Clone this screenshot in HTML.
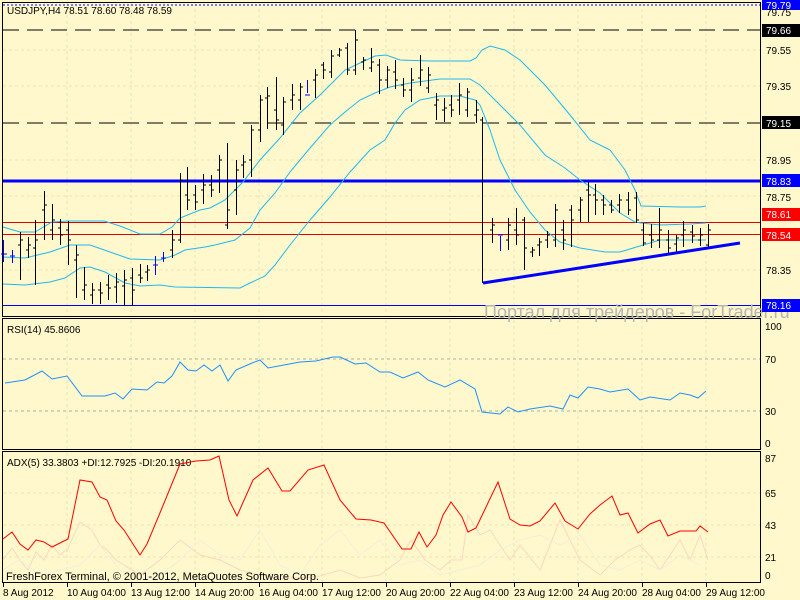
<!DOCTYPE html>
<html><head><meta charset="utf-8"><style>
html,body{margin:0;padding:0;background:#fff8cc;width:800px;height:600px;overflow:hidden}
svg{display:block}
text{font-family:"Liberation Sans",sans-serif;font-size:10px;fill:#000}
</style></head><body>
<svg width="800" height="600" viewBox="0 0 800 600" xmlns="http://www.w3.org/2000/svg">
<rect width="800" height="600" fill="#fff8cc"/>
<!-- grid -->
<g stroke="#ece4b4" stroke-width="1" stroke-dasharray="3,3">
<path d="M67 3V316M131 3V316M195 3V316M259 3V316M322 3V316M386 3V316M450 3V316M514 3V316M578 3V316M642 3V316M706 3V316"/>
<path d="M3 50H760M3 86H760M3 160H760M3 196H760M3 270H760"/>
<path d="M67 320V449M131 320V449M195 320V449M259 320V449M322 320V449M386 320V449M450 320V449M514 320V449M578 320V449M642 320V449M706 320V449"/>
<path d="M67 453V581M131 453V581M195 453V581M259 453V581M322 453V581M386 453V581M450 453V581M514 453V581M578 453V581M642 453V581M706 453V581"/>
<path d="M3 493H760M3 525H760M3 557H760"/>
</g>
<!-- pane borders -->
<g fill="none" stroke="#000" stroke-width="1">
<rect x="2.5" y="2.5" width="758" height="314"/>
<rect x="2.5" y="318.5" width="758" height="131"/>
<rect x="2.5" y="451.5" width="758" height="131"/>
</g>
<!-- horizontal levels -->
<path d="M3 5H760" stroke="#0000ff" stroke-dasharray="2,2"/>
<path d="M3 30H760M3 123H760" stroke="#000" stroke-dasharray="16,8"/>
<path d="M3 181H760" stroke="#0000ff" stroke-width="3"/>
<path d="M3 222.5H760M3 234.5H760" stroke="#e00000" stroke-width="1"/>
<path d="M3 305.5H760" stroke="#0000ff" stroke-width="1"/>
<!-- bollinger -->
<g fill="none" stroke="#20b8f0" stroke-width="1">
<polyline points="3,227 20,232 35,232 52,222 68,221 104,221 120,226 140,234 160,234 172,227 180,218 200,210 210,208 225,200 243,182 260,160 280,138 300,113 320,95 345,70 360,63 375,56 386,55 400,60 430,61 470,61 476,58 482,50 490,46 505,50 520,60 545,85 570,115 590,140 610,150 625,170 635,190 641,206 680,207 700,207 706,206"/>
<polyline points="3,257 25,258 50,252 70,245 90,245 110,252 130,259 160,260 175,255 185,250 205,247 215,245 235,240 250,228 260,210 275,193 290,172 310,148 330,125 345,112 360,100 375,93 390,87 410,83 440,79 470,79 480,85 495,100 520,125 545,155 565,168 580,180 600,193 620,213 635,222 641,223 660,225 690,224 706,223"/>
<polyline points="3,284 25,285 50,282 65,278 80,268 90,267 105,272 125,283 140,286 160,285 175,287 240,288 250,283 265,276 275,265 290,245 310,220 330,197 350,172 370,150 385,140 395,123 405,110 420,100 440,96 460,96 475,100 480,105 490,130 500,160 515,190 530,212 545,230 560,242 580,248 605,252 620,252 640,246 650,243 660,240 690,240 706,240"/>
</g>
<!-- bars -->
<g stroke="#000" stroke-width="1" fill="none">
<path d="M20.5 232V280M28.5 237V258M35.5 220V285M44.5 191V240M52.5 204V240M60.5 219V245M68.5 221V265M76.5 245V298M84.5 267V300M92.5 283V304M100.5 282V304M108.5 275V300M116.5 273V303M124.5 270V306M132.5 268V306M140.5 264V283M147.5 265V281M172.5 230V258M180.5 173V243M187.5 167V210M195.5 185V210M203.5 174V204M211.5 175V197M219.5 155V193M227.5 143V229M236.5 160V215M243.5 155V178M251.5 125V177M260.5 95V142M267.5 87V129M276.5 77V130M283.5 97V135M292.5 84V110M300.5 83V110M315.5 69V98M323.5 62V79M331.5 50V78M339.5 48V57M347.5 43V75M355.5 30V75M363.5 57V70M371.5 48V72M379.5 59V94M387.5 66V88M395.5 60V89M403.5 78V97M411.5 68V102M420.5 55V86M428.5 67V93M436.5 93V120M444.5 98V122M451.5 95V117M459.5 83V115M467.5 88V117M476.5 100V123M482.5 117V283M492.5 218V243M508.5 218V250M516.5 208V245M524.5 217V270M532.5 247V257M539.5 238V256M547.5 231V248M555.5 204V247M563.5 220V250M571.5 205V247M580.5 197V222M588.5 182V222M595.5 184V215M603.5 195V215M611.5 200V213M619.5 194V213M628.5 192V215M636.5 192V223M643.5 223V246M651.5 224V248M659.5 208V248M668.5 230V253M676.5 235V253M683.5 221V247M692.5 225V243M700.5 228V246M708.5 224V248"/>
<path d="M18 245h2M21 240h2M26 250h2M29 245h2M33 248h2M36 240h2M42 210h2M45 205h2M50 230h2M53 220h2M58 228h2M61 235h2M66 230h2M69 240h2M74 260h2M77 255h2M82 290h2M85 285h2M90 295h2M93 290h2M98 290h2M101 293h2M106 285h2M109 288h2M114 287h2M117 282h2M122 286h2M125 280h2M130 278h2M133 290h2M138 275h2M141 278h2M145 272h2M148 270h2M170 250h2M173 240h2M178 240h2M181 180h2M185 195h2M188 200h2M193 195h2M196 202h2M201 190h2M204 185h2M209 185h2M212 190h2M217 170h2M220 160h2M225 225h2M228 210h2M234 190h2M237 170h2M241 165h2M244 162h2M249 160h2M252 130h2M258 130h2M261 100h2M265 98h2M268 96h2M274 110h2M277 120h2M281 125h2M284 102h2M290 100h2M293 95h2M298 100h2M301 87h2M313 80h2M316 75h2M321 65h2M324 70h2M329 72h2M332 56h2M337 55h2M340 50h2M345 48h2M348 70h2M353 70h2M356 40h2M361 62h2M364 60h2M369 68h2M372 62h2M377 65h2M380 80h2M385 80h2M388 70h2M393 72h2M396 80h2M401 85h2M404 90h2M409 90h2M412 80h2M418 78h2M421 70h2M426 88h2M429 75h2M434 105h2M437 100h2M442 110h2M445 108h2M449 105h2M452 110h2M457 100h2M460 95h2M465 110h2M468 92h2M474 115h2M477 110h2M480 120h2M490 230h2M493 225h2M506 240h2M509 225h2M514 230h2M517 235h2M522 220h2M525 248h2M530 252h2M533 250h2M537 245h2M540 242h2M545 240h2M548 235h2M553 240h2M556 210h2M561 230h2M564 240h2M569 210h2M572 220h2M578 210h2M581 200h2M586 190h2M589 195h2M593 195h2M596 200h2M601 200h2M604 205h2M609 205h2M612 210h2M617 205h2M620 200h2M626 200h2M629 210h2M634 198h2M637 220h2M641 230h2M644 243h2M649 235h2M652 240h2M657 240h2M660 230h2M666 240h2M669 248h2M674 244h2M677 238h2M681 235h2M684 230h2M690 232h2M693 236h2M698 240h2M701 235h2M706 245h2M709 230h2"/>
</g>
<g stroke="#0000ff" stroke-width="1">
<path d="M3.5 240V262M1 254h6M12.5 250V263M10 256h5M155.5 256V275M153 265h5M163.5 252V262M161 258h5M307.5 80V93M305 95h5M500.5 236V251M498 235h5"/>
</g>
<path d="M483 283L740 243" stroke="#0000ff" stroke-width="3"/>
<!-- watermark -->
<text x="484" y="318" style="font-size:18px;fill:#b4b4b4">Портал для трейдеров - ForTrader.ru</text>
<text x="7" y="14" style="font-size:10px">USDJPY,H4  78.51 78.60 78.48 78.59</text>
<!-- right axis labels -->
<g>
<rect x="762" y="0" width="38" height="10" fill="#0000ff"/><text x="766" y="9" style="fill:#fff">79.79</text>
<text x="766" y="16">79.75</text>
<rect x="762" y="24" width="38" height="13" fill="#000"/><text x="766" y="34" style="fill:#fff">79.66</text>
<text x="766" y="54">79.55</text>
<text x="766" y="90">79.35</text>
<rect x="762" y="116" width="38" height="13" fill="#000"/><text x="766" y="127" style="fill:#fff">79.15</text>
<text x="766" y="164">78.95</text>
<rect x="762" y="174" width="38" height="13" fill="#0000ff"/><text x="766" y="185" style="fill:#fff">78.83</text>
<text x="766" y="201">78.75</text>
<rect x="762" y="208" width="38" height="13" fill="#ff0000"/><text x="766" y="218" style="fill:#fff">78.61</text>
<rect x="762" y="228" width="38" height="13" fill="#ff0000"/><text x="766" y="239" style="fill:#fff">78.54</text>
<text x="766" y="274">78.35</text>
<rect x="762" y="299" width="38" height="13" fill="#0000ff"/><text x="766" y="309" style="fill:#fff">78.16</text>
</g>
<!-- RSI -->
<path d="M3 359H760M3 411H760" stroke="#b0b0a0" stroke-dasharray="3,3"/>
<text x="7" y="333">RSI(14) 45.8606</text>
<polyline fill="none" stroke="#1e90ff" stroke-width="1" points="5,383 25,380 42,371 52,379 67,376 82,396 97,396 105,396 115,393 123,399 132,389 147,390 157,382 164,383 172,376 180,362 188,370 196,371 204,365 212,371 220,365 228,381 236,370 252,363 260,360 268,368 284,365 300,362 316,361 333,357 340,357 355,364 366,363 380,372 390,372 403,378 418,372 428,380 445,387 460,380 475,389 482,412 500,414 508,407 518,412 530,409 550,406 563,409 570,395 578,398 588,387 600,389 610,392 628,389 640,400 650,397 670,400 680,393 690,395 698,398 706,391"/>
<text x="765" y="330">100</text><text x="765" y="363">70</text><text x="765" y="415">30</text><text x="765" y="447">0</text>
<!-- ADX -->
<polyline fill="none" stroke="#f8d8c0" points="3,560 12,548 20,560 28,570 36,552 44,560 52,545 60,555 68,548 80,522 92,530 100,545 107,550 116,560 124,565 140,575 160,560 180,540 200,555 220,560 240,570 260,575 280,578 300,578 320,576 340,570 360,578 380,575 400,560 411,540 425,560 440,570 451,560 462,560 468,515 480,535 490,530 510,560 520,545 540,570 560,520 580,560 600,575 615,560 630,550 640,545 650,556 660,570 680,540 690,560 700,535 708,560"/>
<polyline fill="none" stroke="#f4eed8" points="3,570 20,560 40,575 60,570 80,565 100,545 120,570 140,580 160,575 180,560 200,540 220,555 240,560 260,530 280,565 300,575 320,545 340,530 360,555 380,540 400,565 420,560 440,575 460,570 480,565 500,550 520,540 540,535 560,545 580,535 600,565 620,570 640,560 660,570 680,555 700,565"/>
<text x="7" y="466">ADX(5) 33.3803 +DI:12.7925 -DI:20.1910</text>
<polyline fill="none" stroke="#ff0000" stroke-width="1" points="3,539 12,532 20,544 28,550 36,540 44,542 52,547 60,543 68,539 80,480 92,482 100,497 107,500 116,521 124,530 140,555 147,544 162,508 180,464 196,461 210,460 219,456 229,500 237,516 253,480 268,468 282,491 290,491 308,470 324,465 340,500 356,519 371,520 384,523 402,549 411,549 419,532 427,547 436,535 443,515 451,502 462,517 468,532 476,528 498,482 510,519 520,525 530,526 540,521 555,503 565,521 578,529 590,514 600,505 612,496 620,515 628,513 638,533 650,524 660,520 668,536 680,531 690,531 696,531 700,526 708,532"/>
<text x="765" y="462">87</text><text x="765" y="497">65</text><text x="765" y="529">43</text><text x="765" y="561">21</text><text x="765" y="579">0</text>
<text x="6" y="580" style="font-size:11px">FreshForex Terminal, © 2001-2012, MetaQuotes Software Corp.</text>
<!-- time axis -->
<path d="M3.5 583V587M67.5 583V587M131.5 583V587M195.5 583V587M259.5 583V587M322.5 583V587M386.5 583V587M450.5 583V587M514.5 583V587M578.5 583V587M642.5 583V587M706.5 583V587" stroke="#000"/>
<g>
<text x="3" y="596">8 Aug 2012</text>
<text x="67" y="596">10 Aug 04:00</text>
<text x="131" y="596">13 Aug 12:00</text>
<text x="195" y="596">14 Aug 20:00</text>
<text x="259" y="596">16 Aug 04:00</text>
<text x="322" y="596">17 Aug 12:00</text>
<text x="386" y="596">20 Aug 20:00</text>
<text x="450" y="596">22 Aug 04:00</text>
<text x="514" y="596">23 Aug 12:00</text>
<text x="578" y="596">24 Aug 20:00</text>
<text x="642" y="596">28 Aug 04:00</text>
<text x="706" y="596">29 Aug 12:00</text>
</g>
</svg>
</body></html>
